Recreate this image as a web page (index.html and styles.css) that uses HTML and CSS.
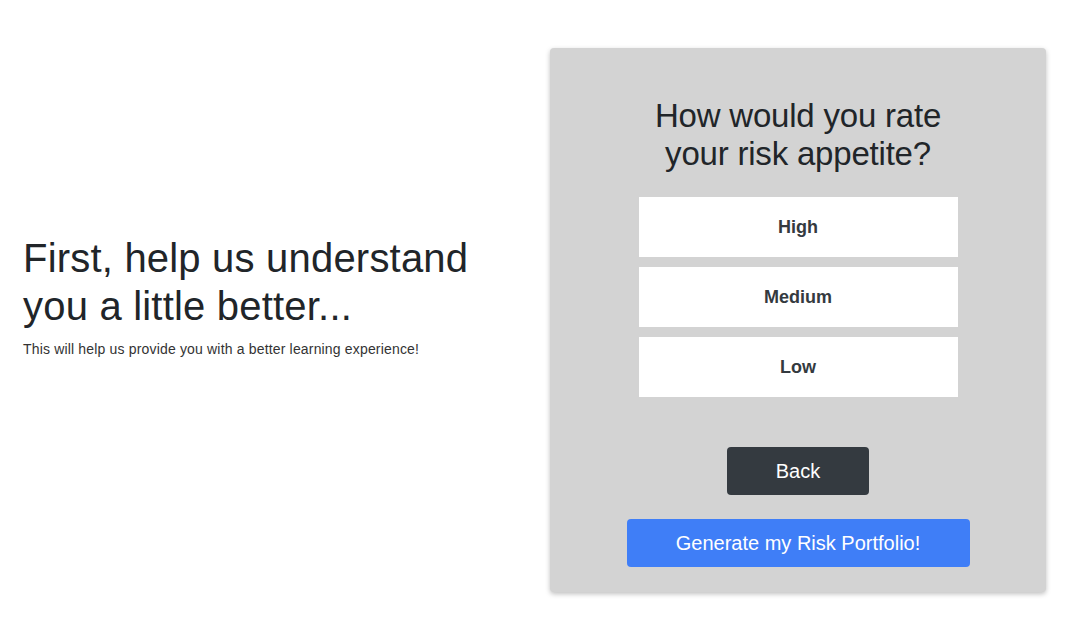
FILE: index.html
```html
<!DOCTYPE html>
<html lang="en">
<head>
    <meta charset="UTF-8">
    <meta name="viewport" content="width=device-width, initial-scale=1.0">
    <title>Risk Appetite</title>
    <link rel="stylesheet" href="styles.css">
</head>
<body>
    <div class="page">
        <div class="intro">
            <h1>First, help us understand you a little better...</h1>
            <p>This will help us provide you with a better learning experience!</p>
        </div>

        <div class="question-card">
            <h2>How would you rate<br>your risk appetite?</h2>
            <div class="options">
                <button class="option">High</button>
                <button class="option">Medium</button>
                <button class="option">Low</button>
            </div>
            <button class="btn-back">Back</button>
            <button class="btn-generate">Generate my Risk Portfolio!</button>
        </div>
    </div>
</body>
</html>
```

FILE: styles.css
```css
body {
    font-family: "Liberation Sans", Arial, sans-serif;
    color: #212529;
    background: #fff;
    margin: 0;
}
.page {
    display: flex;
    align-items: flex-start;
    padding: 48px 30px 42px 23px;
}
.intro {
    width: 480px;
    margin-right: 47px;
    align-self: center;
    padding-bottom: 33px;
}
.intro h1 {
    font-size: 40px;
    font-weight: normal;
    line-height: 48px;
    letter-spacing: 0.2px;
    margin: 0 0 11px;
}
.intro p {
    font-size: 14px;
    color: #333;
    letter-spacing: 0.17px;
    margin: 0 0 16px;
}
.question-card {
    width: 496px;
    background: #d3d3d3;
    border-radius: 4px;
    box-shadow: 0 2px 5px rgba(0, 0, 0, 0.25);
    padding: 49px 0 25px;
    display: flex;
    flex-direction: column;
    align-items: center;
}
.question-card h2 {
    font-size: 33px;
    font-weight: normal;
    line-height: 38px;
    letter-spacing: -0.2px;
    text-align: center;
    margin: 0 0 24px;
}
.options {
    display: flex;
    flex-direction: column;
    gap: 10px;
    margin-bottom: 50px;
}
button {
    font-family: inherit;
    border: none;
    cursor: pointer;
}
.option {
    width: 319px;
    height: 60px;
    background: #fff;
    color: #343a40;
    font-size: 18px;
    font-weight: bold;
}
.btn-back {
    width: 142px;
    height: 48px;
    background: #343a40;
    color: #fff;
    font-size: 20px;
    border-radius: 4px;
    margin-bottom: 24px;
}
.btn-generate {
    width: 343px;
    height: 48px;
    background: #3f7ef7;
    color: #fff;
    font-size: 20px;
    border-radius: 4px;
}
```
